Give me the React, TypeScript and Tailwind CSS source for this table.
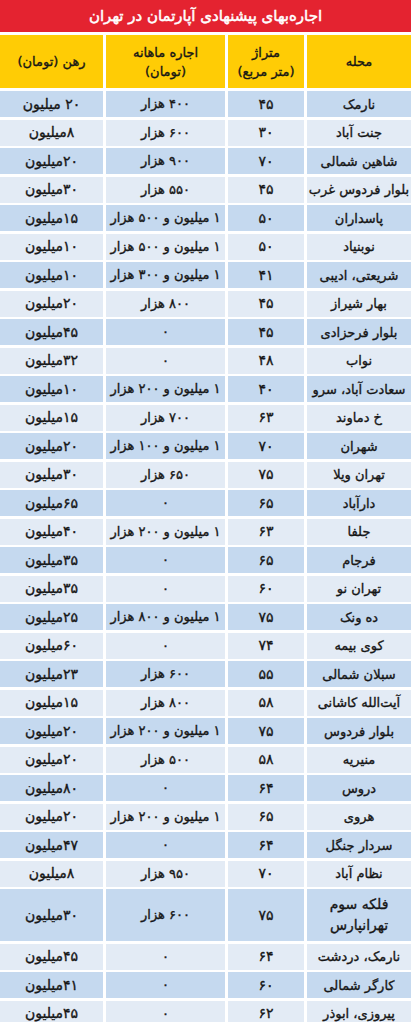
import React from 'react';

type Row = { area: string; size: string; rent: string; deposit: string; tall?: boolean };

const rows: Row[] = [
  { area: 'نارمک', size: '۴۵', rent: '۴۰۰ هزار', deposit: '۲۰ میلیون' },
  { area: 'جنت آباد', size: '۳۰', rent: '۶۰۰ هزار', deposit: '۸میلیون' },
  { area: 'شاهین شمالی', size: '۷۰', rent: '۹۰۰ هزار', deposit: '۲۰میلیون' },
  { area: 'بلوار فردوس غرب', size: '۴۵', rent: '۵۵۰ هزار', deposit: '۳۰میلیون' },
  { area: 'پاسداران', size: '۵۰', rent: '۱ میلیون و ۵۰۰ هزار', deposit: '۱۵میلیون' },
  { area: 'نوبنیاد', size: '۵۰', rent: '۱ میلیون و ۵۰۰ هزار', deposit: '۱۰میلیون' },
  { area: 'شریعتی، ادیبی', size: '۴۱', rent: '۱ میلیون و ۳۰۰ هزار', deposit: '۱۰میلیون' },
  { area: 'بهار شیراز', size: '۴۵', rent: '۸۰۰ هزار', deposit: '۲۰میلیون' },
  { area: 'بلوار فرحزادی', size: '۴۵', rent: '۰', deposit: '۴۵میلیون' },
  { area: 'نواب', size: '۴۸', rent: '۰', deposit: '۳۲میلیون' },
  { area: 'سعادت آباد، سرو', size: '۴۰', rent: '۱ میلیون و ۲۰۰ هزار', deposit: '۱۰میلیون' },
  { area: 'خ دماوند', size: '۶۳', rent: '۷۰۰ هزار', deposit: '۱۵میلیون' },
  { area: 'شهران', size: '۷۰', rent: '۱ میلیون و ۱۰۰ هزار', deposit: '۲۰میلیون' },
  { area: 'تهران ویلا', size: '۷۵', rent: '۶۵۰ هزار', deposit: '۳۰میلیون' },
  { area: 'دارآباد', size: '۶۵', rent: '۰', deposit: '۶۵میلیون' },
  { area: 'جلفا', size: '۶۳', rent: '۱ میلیون و ۲۰۰ هزار', deposit: '۴۰میلیون' },
  { area: 'فرجام', size: '۶۵', rent: '۰', deposit: '۳۵میلیون' },
  { area: 'تهران نو', size: '۶۰', rent: '۰', deposit: '۳۵میلیون' },
  { area: 'ده ونک', size: '۷۵', rent: '۱ میلیون و ۸۰۰ هزار', deposit: '۲۵میلیون' },
  { area: 'کوی بیمه', size: '۷۴', rent: '۰', deposit: '۶۰میلیون' },
  { area: 'سبلان شمالی', size: '۵۵', rent: '۶۰۰ هزار', deposit: '۲۳میلیون' },
  { area: 'آیت‌الله کاشانی', size: '۵۸', rent: '۸۰۰ هزار', deposit: '۱۵میلیون' },
  { area: 'بلوار فردوس', size: '۷۵', rent: '۱ میلیون و ۲۰۰ هزار', deposit: '۲۰میلیون' },
  { area: 'منیریه', size: '۵۸', rent: '۵۰۰ هزار', deposit: '۲۰میلیون' },
  { area: 'دروس', size: '۶۴', rent: '۰', deposit: '۸۰میلیون' },
  { area: 'هروی', size: '۶۵', rent: '۱ میلیون و ۲۰۰ هزار', deposit: '۲۰میلیون' },
  { area: 'سردار جنگل', size: '۶۴', rent: '۰', deposit: '۴۷میلیون' },
  { area: 'نظام آباد', size: '۷۰', rent: '۹۵۰ هزار', deposit: '۸میلیون' },
  { area: 'فلکه سوم تهرانپارس', size: '۷۵', rent: '۶۰۰ هزار', deposit: '۳۰میلیون', tall: true },
  { area: 'نارمک، دردشت', size: '۶۴', rent: '۰', deposit: '۴۵میلیون' },
  { area: 'کارگر شمالی', size: '۶۰', rent: '۰', deposit: '۴۱میلیون' },
  { area: 'پیروزی، ابوذر', size: '۶۲', rent: '۰', deposit: '۴۵میلیون' },
];

const cols = 'grid grid-cols-[104px_76px_119px_1fr] gap-x-[3px]';

export default function App() {
  return (
    <div
      dir="rtl"
      className="w-[411px] h-[1022px] overflow-hidden bg-white text-[#161616]"
      style={{ fontFamily: '"DejaVu Sans", "Noto Sans", sans-serif' }}
    >
      <div className="h-[32px] bg-[#e42330] flex items-center justify-center text-white text-[15px] [-webkit-text-stroke:0.5px_#ffffff]">
        اجاره‌بهای پیشنهادی آپارتمان در تهران
      </div>

      <div className={`${cols} mt-[3px] h-[53px] [-webkit-text-stroke:0.35px_#161616]`}>
        <div className="bg-[#ffcc05] flex items-center justify-center text-[13px]">محله</div>
        <div className="bg-[#ffcc05] flex flex-col items-center justify-center text-[13px] leading-[19px]">
          <span>متراژ</span>
          <span>(متر مربع)</span>
        </div>
        <div className="bg-[#ffcc05] flex flex-col items-center justify-center text-[13px] leading-[19px]">
          <span>اجاره ماهانه</span>
          <span>(تومان)</span>
        </div>
        <div className="bg-[#ffcc05] flex items-center justify-center text-[13px]">رهن (تومان)</div>
      </div>

      <div className="flex flex-col gap-y-[2.5px] mt-[3px]">
        {rows.map((r, i) => {
          const bg = i % 2 === 0 ? 'bg-[#c5d9ef]' : 'bg-[#e3ebf5]';
          return (
            <div
              key={i}
              className={`${cols} ${r.tall ? 'h-[52px]' : 'h-[26px]'} text-[13px] [-webkit-text-stroke:0.35px_#161616]`}
            >
              <div className={`${bg} flex items-center justify-center text-center leading-[21px]`}>
                {r.tall ? (
                  <span className="flex flex-col items-center text-[14px]">
                    <span>فلکه سوم</span>
                    <span>تهرانپارس</span>
                  </span>
                ) : (
                  <span className="whitespace-nowrap">{r.area}</span>
                )}
              </div>
              <div className={`${bg} flex items-center justify-center text-[14px]`}>{r.size}</div>
              <div className={`${bg} flex items-center justify-center whitespace-nowrap`}>{r.rent}</div>
              <div className={`${bg} flex items-center justify-center whitespace-nowrap text-[14px]`}>{r.deposit}</div>
            </div>
          );
        })}
      </div>
    </div>
  );
}
